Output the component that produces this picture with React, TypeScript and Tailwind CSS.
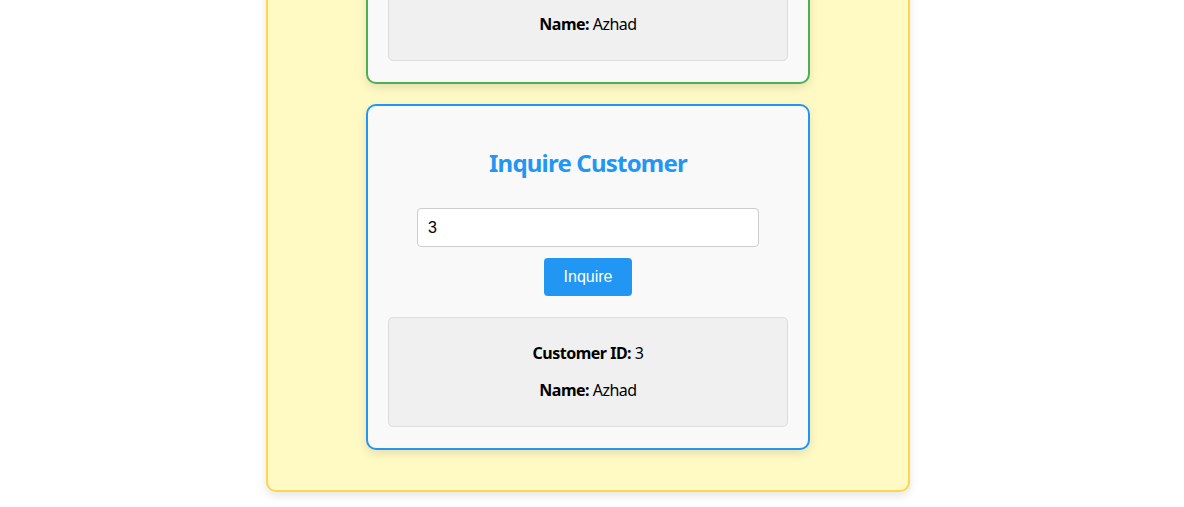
import { useState } from "react";

// Two stacked customer cards inside a yellow panel; the page is shown scrolled
// so only the bottom of the first card is visible.

type Tone = "green" | "blue";

const TONES: Record<Tone, { border: string; title: string }> = {
  green: { border: "border-[#4caf50]", title: "text-[#4caf50]" },
  blue: { border: "border-[#2196f3]", title: "text-[#2196f3]" },
};

function CustomerCard({
  tone,
  title,
  action,
  id,
  name,
}: {
  tone: Tone;
  title: string;
  action: string;
  id: string;
  name: string;
}) {
  const [value, setValue] = useState(id);
  const t = TONES[tone];

  return (
    <div
      className={`w-[444px] rounded-[10px] border-2 ${t.border} bg-[#f9f9f9] px-[20px] pt-[20px] pb-[21px] shadow-[0_4px_10px_rgba(0,0,0,0.1)] flex flex-col items-center`}
    >
      <h2
        className={`mt-[21px] text-[24px] leading-[32px] font-bold tracking-[-0.8px] ${t.title}`}
      >
        {title}
      </h2>
      <input
        value={value}
        onChange={(e) => setValue(e.target.value)}
        className="mt-[29px] w-[342px] h-[39px] rounded-[4px] border border-[#ccc] bg-white px-[10px] text-[16px] text-black outline-none font-['Liberation_Sans',Arial,sans-serif]"
      />
      <button className="mt-[11px] h-[38px] rounded-[4px] bg-[#2196f3] px-[20px] text-[16px] text-white font-['Liberation_Sans',Arial,sans-serif]">
        {action}
      </button>
      <div className="mt-[21px] w-[400px] rounded-[5px] border border-[#ddd] bg-[#f0f0f0] py-[25px] flex flex-col items-center gap-[16px] text-[16px] leading-[21px] tracking-[-0.5px] text-black">
        <p>
          <span className="font-bold">Customer ID:</span> {id}
        </p>
        <p>
          <span className="font-bold">Name:</span> {name}
        </p>
      </div>
    </div>
  );
}

export default function App() {
  return (
    <div className="w-[1176px] bg-white font-['Noto_Sans',sans-serif] flex justify-center pb-[16px] -mt-[284px]">
      <div className="w-[644px] rounded-[10px] border-2 border-[#ffd54f] bg-[#fff9c4] px-[20px] pt-[20px] pb-[40px] shadow-[0_4px_10px_rgba(0,0,0,0.1)] flex flex-col items-center gap-[20px]">
        <CustomerCard
          tone="green"
          title="Add Customer"
          action="Add"
          id="3"
          name="Azhad"
        />
        <CustomerCard
          tone="blue"
          title="Inquire Customer"
          action="Inquire"
          id="3"
          name="Azhad"
        />
      </div>
    </div>
  );
}
